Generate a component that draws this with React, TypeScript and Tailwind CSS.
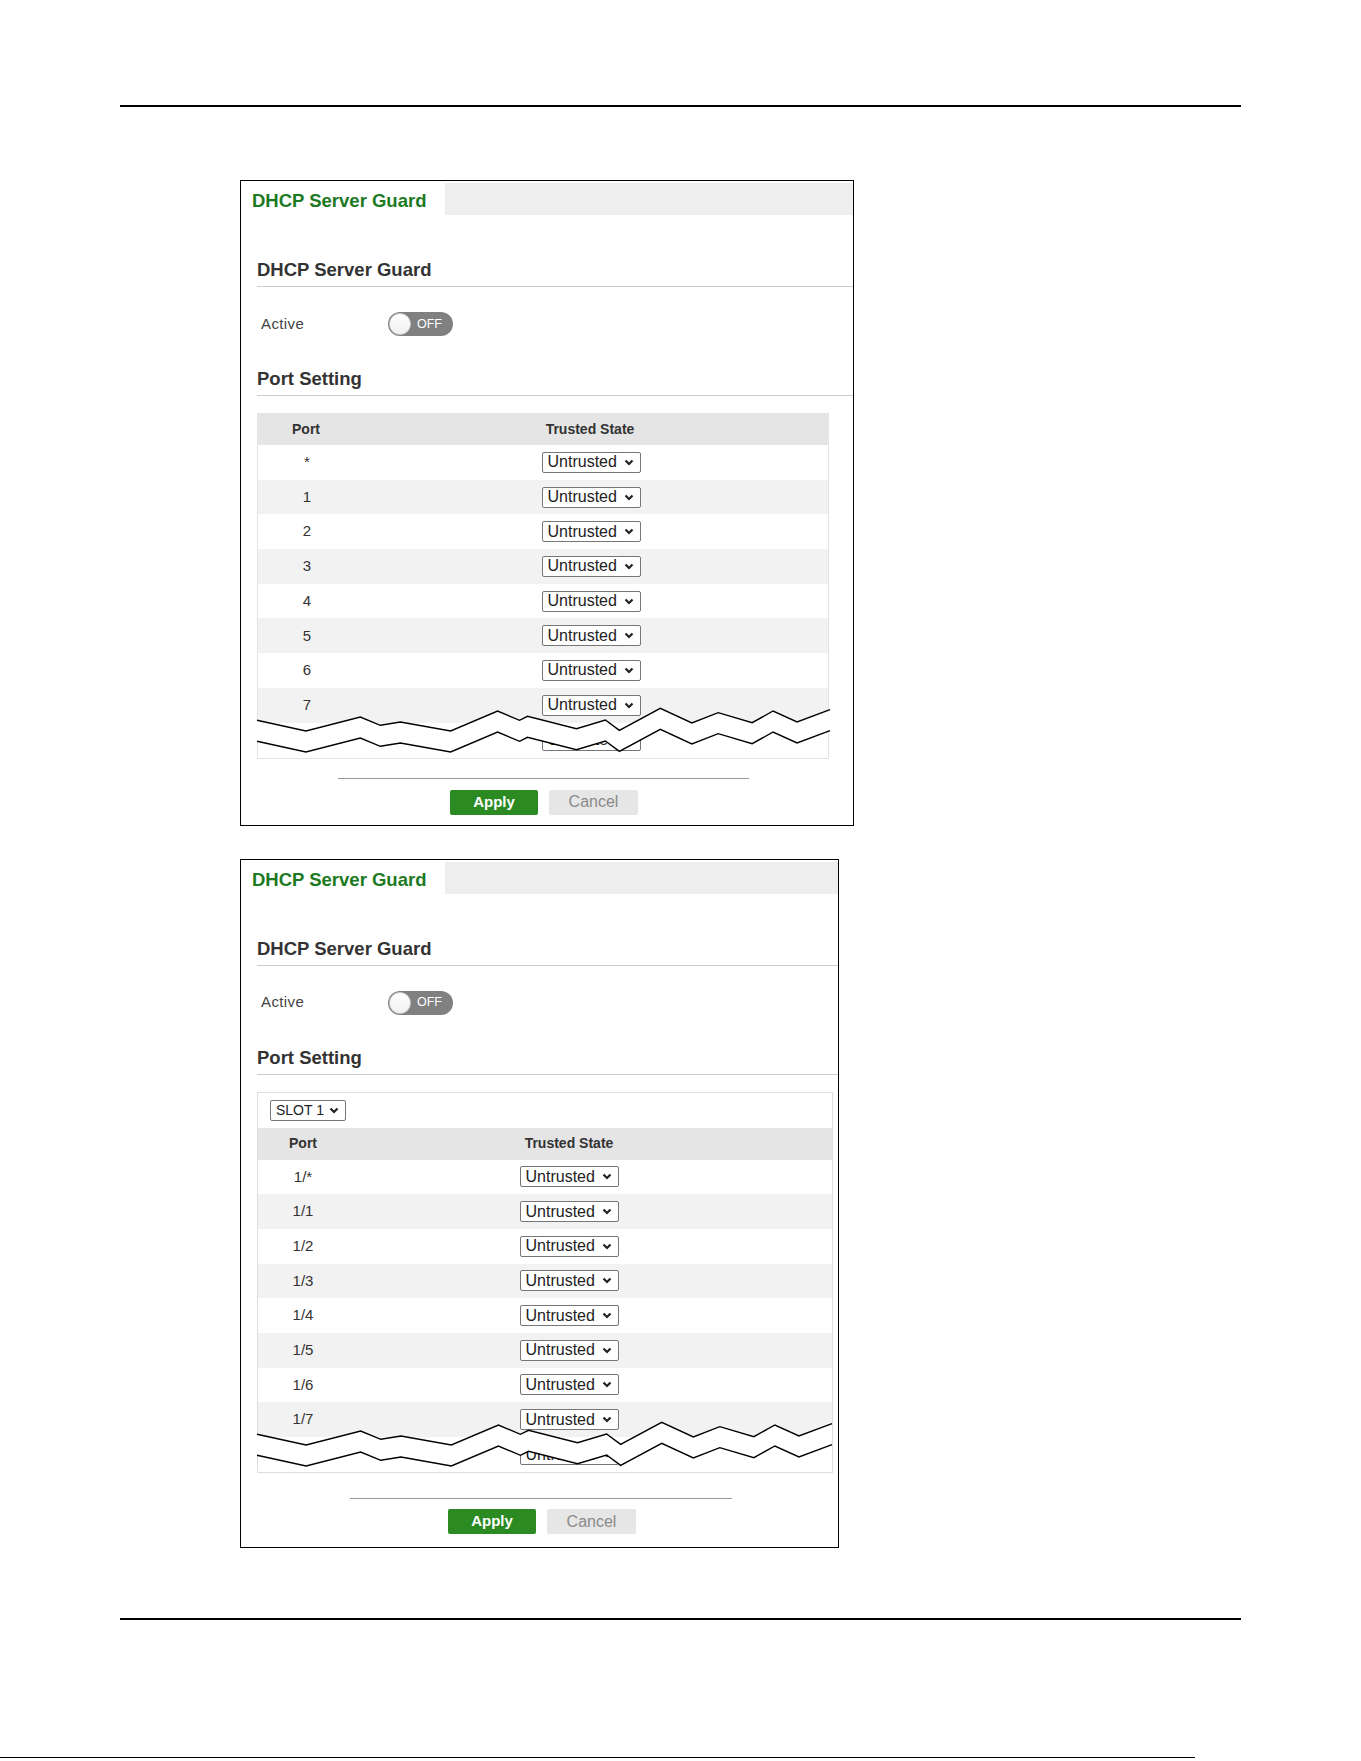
import React from 'react'

// zigzag "break" line, drawn for a table 573px wide; x is scaled to the real width
const UPPER: [number, number][] = [
  [-1, -2.7], [48, 8], [102.5, -6], [122.6, 2.3], [142.7, -1], [193, 8], [240, -12],
  [262, -2.7], [270, -6.7], [319, 5.7], [348, -3], [362, 7.3], [403, -14.7], [434.6, 0],
  [461, -10.3], [495, -0.3], [516, -12], [540, -1], [573, -13.3],
]

const Chevron = () => (
  <svg width="10" height="7" viewBox="0 0 10 7" className="shrink-0">
    <path d="M1.5 1.5 L5 5 L8.5 1.5" fill="none" stroke="#222" strokeWidth="2.2" />
  </svg>
)

const Dropdown = ({ label, width, text }: { label: string; width: string; text: string }) => (
  <div className={`flex items-center justify-between h-[21px] ${width} border border-[#767676] rounded-[2px] bg-white pl-[5px] pr-[6px]`}>
    <span className={`${text} leading-none whitespace-nowrap text-[#222]`}>{label}</span>
    <Chevron />
  </div>
)

const Toggle = () => (
  <div className="flex items-center w-[65px] h-[24px] rounded-full bg-[#808080] pl-[1px]">
    <div className="w-[22px] h-[22px] rounded-full bg-gradient-to-b from-white to-[#f0f0f0] border border-[#cfcfcf]" />
    <span className="ml-[6px] text-[12.5px] leading-none text-white">OFF</span>
  </div>
)

const ZigZag = ({ width }: { width: number }) => {
  const k = width / 573
  const up = UPPER.map(([x, y]) => [x * k + 1, y + 20] as [number, number])
  const low = up.map(([x, y]) => [x, y + 21] as [number, number])
  const toStr = (pts: [number, number][]) => pts.map(p => p.join(',')).join(' ')
  return (
    <svg
      width={width + 2}
      height={70}
      className="absolute left-[-1px] top-[257.6px] overflow-visible"
    >
      <polygon points={toStr([...up, ...low.slice().reverse()])} fill="#fff" />
      <polyline points={toStr(up)} fill="none" stroke="#000" strokeWidth="1.4" />
      <polyline points={toStr(low)} fill="none" stroke="#000" strokeWidth="1.4" />
    </svg>
  )
}

const PortRows = ({ ports, portW, stateW, width }: { ports: string[]; portW: string; stateW: string; width: number }) => (
  <div className="relative">
    {ports.map((p, i) => (
      <div
        key={i}
        className={`flex items-center ${i === ports.length - 1 ? 'h-[35px]' : 'h-[34.7px]'} ${i % 2 === 1 ? 'bg-[#f2f2f2]' : 'bg-white'}`}
      >
        <div className={`${portW} text-center text-[15px] text-[#333]`}>{p}</div>
        <div className={`${stateW} flex justify-center`}>
          <Dropdown label="Untrusted" width="w-[99px]" text="text-[16px]" />
        </div>
      </div>
    ))}
    <ZigZag width={width} />
  </div>
)

const TableHeader = ({ portW, stateW }: { portW: string; stateW: string }) => (
  <div className="flex items-center h-[32px] bg-[#e5e5e5] text-[14px] font-bold text-[#333]">
    <div className={`${portW} text-center`}>Port</div>
    <div className={`${stateW} text-center`}>Trusted State</div>
  </div>
)

const PanelTop = () => (
  <>
    <div className="flex h-[34px]">
      <div className="w-[204px] flex items-center pl-[11px] pt-[6px] text-[18.5px] font-bold text-[#1c7a22] whitespace-nowrap">
        DHCP Server Guard
      </div>
      <div className="flex-1 mt-[2px] bg-[#eeeeee]" />
    </div>
    <div className="pl-[16px]">
      <div className="mt-[43px] pb-[4px] border-b border-[#cccccc] text-[18.5px] leading-[24px] font-bold text-[#333]">
        DHCP Server Guard
      </div>
      <div className="mt-[25px] flex items-center h-[24px]">
        <span className="w-[131px] pl-[4px] text-[15px] tracking-[0.4px] text-[#444]">Active</span>
        <Toggle />
      </div>
      <div className="mt-[31px] pb-[4px] border-b border-[#cccccc] text-[18.5px] leading-[24px] font-bold text-[#333]">
        Port Setting
      </div>
    </div>
  </>
)

const Buttons = () => (
  <div className="flex gap-[11px]">
    <button className="w-[88px] h-[25px] rounded-[2px] bg-[#2b8a22] text-[15px] font-bold text-white">Apply</button>
    <button className="w-[89px] h-[25px] rounded-[2px] bg-[#e6e6e6] text-[16px] text-[#8a8a8a]">Cancel</button>
  </div>
)

export default function App() {
  const ports1 = ['*', '1', '2', '3', '4', '5', '6', '7', '']
  const ports2 = ['1/*', '1/1', '1/2', '1/3', '1/4', '1/5', '1/6', '1/7', '']

  return (
    <div className="w-[1361px] h-[1761px] bg-white font-['Liberation_Sans',Arial,sans-serif] overflow-hidden">
      <div className="pt-[105px]">
        <div className="ml-[120px] w-[1121px] h-[2px] bg-black" />

        {/* panel without slot selector */}
        <div className="ml-[240px] mt-[73px] w-[614px] border border-black">
          <PanelTop />
          <div className="pl-[16px]">
            <div className="mt-[17px] w-[572px]">
              <TableHeader portW="w-[98px]" stateW="w-[470px]" />
              <div className="border-x border-b border-[#e3e3e3]">
                <PortRows ports={ports1} portW="w-[98px]" stateW="w-[470px]" width={572} />
              </div>
            </div>
            <div className="mt-[19px] ml-[81px] w-[411px] h-px bg-[#9a9a9a]" />
            <div className="mt-[11px] mb-[10px] ml-[193px]">
              <Buttons />
            </div>
          </div>
        </div>

        {/* panel with slot selector */}
        <div className="ml-[240px] mt-[33px] w-[599px] border border-black">
          <PanelTop />
          <div className="pl-[16px]">
            <div className="mt-[17px] w-[576px] border border-[#dddddd]">
              <div className="h-[35px] pt-[7px] pl-[12px]">
                <Dropdown label="SLOT 1" width="w-[76px]" text="text-[14px]" />
              </div>
              <TableHeader portW="w-[90px]" stateW="w-[442px]" />
              <PortRows ports={ports2} portW="w-[90px]" stateW="w-[442px]" width={574} />
            </div>
            <div className="mt-[25px] ml-[93px] w-[382px] h-px bg-[#9a9a9a]" />
            <div className="mt-[10px] mb-[13px] ml-[191px]">
              <Buttons />
            </div>
          </div>
        </div>

        <div className="ml-[120px] mt-[70px] w-[1121px] h-[2px] bg-black" />
        <div className="mt-[137px] w-[1195px] h-px bg-black" />
      </div>
    </div>
  )
}
